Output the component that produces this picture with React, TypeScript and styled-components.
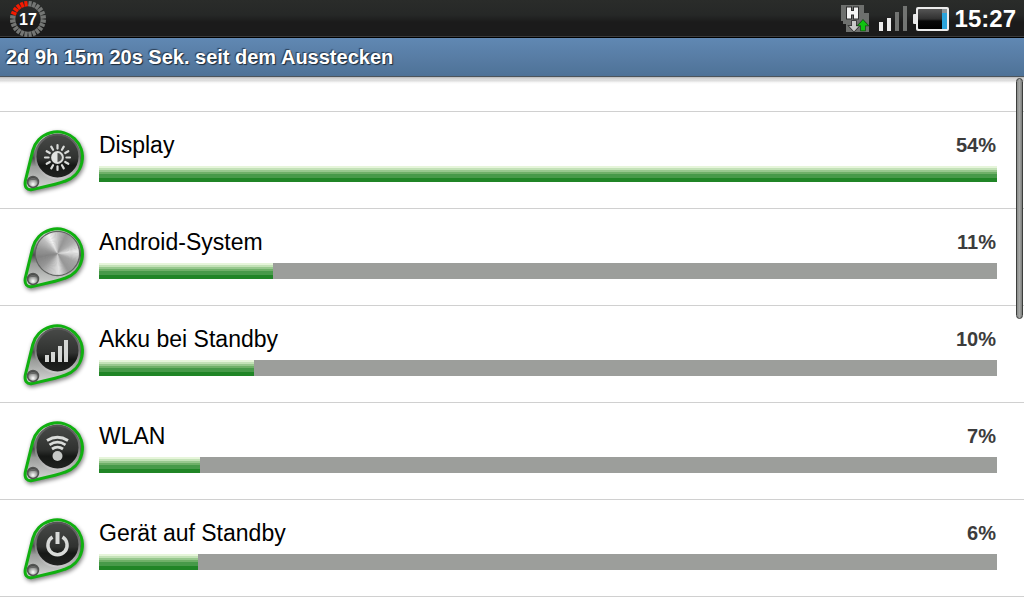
import React from "react";
import styled, { createGlobalStyle } from "styled-components";

const GlobalStyle = createGlobalStyle`
  * { box-sizing: border-box; }
  body {
    margin: 0;
    background: #fff;
    color: #000;
    font-family: "Liberation Sans", Arial, Helvetica, sans-serif;
  }
`;

const Screen = styled.div`
  display: flex;
  flex-direction: column;
  height: 100vh;
  overflow: hidden;
`;

const StatusBar = styled.header`
  display: flex;
  flex: none;
  align-items: center;
  justify-content: space-between;
  height: 38px;
  padding: 0 8px 0 9px;
  background: linear-gradient(#2a2c2a, #262827 40%, #1b1b1b 60%, #1b1b1b);
  border-bottom: 1px solid #000;
  box-shadow: inset 0 -1px 0 #3a3a3a;
`;

const StatusIcons = styled.div`
  display: flex;
  align-items: center;
  gap: 6px;
`;

const Clock = styled.time`
  color: #fff;
  font-size: 24px;
  font-weight: bold;
  line-height: 38px;
`;

const TitleBar = styled.h1`
  flex: none;
  margin: 0;
  padding: 0 6px;
  color: #fff;
  font-size: 20px;
  font-weight: bold;
  line-height: 38px;
  background: linear-gradient(#6088b3, #587da5 50%, #4e7297);
  border-bottom: 1px solid #4c555c;
  text-shadow: 1px 1px 1px #1c2a38, -1px -1px 1px #2c4058;
`;

const Content = styled.main`
  position: relative;
  flex: 1;
  min-height: 0;
  overflow: hidden;
  background: linear-gradient(#b8b8b8, #dcdcdc 2px, #dedede 4px, #f4f4f4 5px, #fff 7px);
`;

const UsageList = styled.ul`
  margin: 0;
  padding: 34px 0 0;
  list-style: none;
`;

const UsageRow = styled.li`
  display: flex;
  align-items: flex-start;
  height: 97px;
  padding: 9px 27px 0 15px;
  border-top: 1px solid #d0d0d0;

  &:last-child { height: 1px; padding: 0; }
`;

const Details = styled.div`
  flex: 1;
  padding: 11px 0 0 4px;
`;

const Labels = styled.div`
  display: flex;
  justify-content: space-between;
  height: 34px;
  padding-right: 1px;
  line-height: 26px;
`;

const Name = styled.label`
  font-size: 23px;
`;

const Share = styled.span`
  color: #3c3c3c;
  font-size: 20px;
  font-weight: bold;
`;

const Meter = styled.progress`
  display: block;
  width: 100%;
  height: 16px;
  border: 0;
  appearance: none;
  background: #9c9e9b;

  &::-webkit-progress-bar { background: #9c9e9b; }
  &::-webkit-progress-value {
    background: linear-gradient(
      #e6f5da 0 2px, #c4e2b8 2px 4px, #98c88e 4px 6px,
      #6fb068 6px 8px, #479a49 8px 12px, #208526 12px 16px
    );
  }
`;

const ScrollThumb = styled.div`
  position: absolute;
  top: 1px;
  right: 1px;
  width: 7px;
  height: 46%;
  background: linear-gradient(90deg, #8a8c8a, #a6a8a6 50%, #7c7e7c);
  border: 1px solid #3c3e3c;
  border-radius: 4px;
`;

const Svg = styled.svg`
  display: block;
  flex: none;
`;

function DayDial() {
  const ticks = Array.from({ length: 24 }, (_, i) => i);
  return (
    <Svg width="38" height="38" viewBox="0 0 38 38" role="img" aria-label="17">
      {ticks.map((i) => (
        <rect key={i} x="17.4" y="1" width="3.2" height="5.4"
          fill={i >= 19 ? "#f51a00" : "#747674"}
          transform={`rotate(${i * 15 + 7.5} 19 19)`} />
      ))}
      <text x="19" y="25" textAnchor="middle" fill="#fff" fontSize="16" fontWeight="bold"
        fontFamily="Liberation Sans, Arial, sans-serif">17</text>
    </Svg>
  );
}

function HsdpaIcon() {
  return (
    <Svg width="32" height="28" viewBox="0 0 32 28" aria-hidden="true">
      <path d="M0 0H23V8H28V27H5V19H2V16H0Z" fill="#6e706e" />
      <path d="M6 2.500h4v3.500h3v-3.500h4v11h-4v-4h-3v4h-4z" fill="#f4f4f4" stroke="#2c2c2c"
        strokeWidth="2" paintOrder="stroke" />
      <path d="M11 16h4v5h3l-5 5.500-5-5.500h3z" fill="#c8cac8" stroke="#2c2c2c"
        strokeWidth="1.500" paintOrder="stroke" />
      <path d="M20 25.500h4v-5h3l-5-5.500-5 5.500h3z" fill="#10c410" stroke="#174a17"
        strokeWidth="1.500" paintOrder="stroke" />
    </Svg>
  );
}

function SignalIcon() {
  return (
    <Svg width="28" height="26" viewBox="0 0 28 26" aria-hidden="true">
      <path d="M0 16h4v9h-4zM8 12h4v13h-4z" fill="#ececec" />
      <path d="M16 6h4v19h-4zM24 0h4v25h-4z" fill="#727472" />
    </Svg>
  );
}

function BatteryIcon() {
  return (
    <Svg width="36" height="24" viewBox="0 0 36 24" aria-hidden="true">
      <defs>
        <linearGradient id="cell" x1="0" y1="0" x2="0" y2="1">
          <stop offset="0" stopColor="#555" />
          <stop offset=".5" stopColor="#303030" />
          <stop offset=".6" stopColor="#080808" />
          <stop offset="1" stopColor="#000" />
        </linearGradient>
      </defs>
      <rect x="0" y="7" width="5" height="10" rx="1" fill="#e8e8e8" />
      <rect x="3" y="0" width="33" height="24" rx="2" fill="#ececec" />
      <rect x="5" y="2" width="29" height="20" rx="1" fill="url(#cell)" />
      <rect x="29" y="2" width="5" height="20" fill="#2ba4dc" />
      <rect x="29" y="2" width="5" height="4" fill="#8c9498" />
    </Svg>
  );
}

type BadgeKind = "sun" | "metal" | "signal" | "wifi" | "power";

const CX = 42.5;
const CY = 35.5;
const OUTLINE =
  "M17.800 29.300A25.300 25.300 0 1 1 50 60.200Q46 61.800 40 63.300L17 68.600C12 69.500 9.300 66 10.300 60Z";

function Glyph({ kind }: { kind: BadgeKind }) {
  if (kind === "sun") {
    return (
      <g fill="none" stroke="#dadcda">
        {Array.from({ length: 12 }, (_, i) => (
          <path key={i} d="M42.500 24v3.600" strokeWidth="2.200" strokeLinecap="round"
            transform={`rotate(${i * 30} ${CX} ${CY + 1})`} />
        ))}
        <circle cx={CX} cy={CY + 1} r="5.400" fill="#4c4e4c" strokeWidth="2" />
        <path d="M42.500 31a5.500 5.500 0 0 0 0 11z" fill="#e2e4e2" stroke="none" />
      </g>
    );
  }
  if (kind === "signal") {
    return (
      <path fill="#d4d6d4"
        d="M15 40h4v7h-4zM21 37h4v10h-4zM28 31h4v16h-4zM34 25h4v22h-4z"
        transform="translate(15 0)" />
    );
  }
  if (kind === "wifi") {
    return (
      <g fill="none" stroke="#dadcda" strokeWidth="2.800">
        <path d="M32 28.500Q42.500 22 53 28.500" />
        <path d="M34.500 32.800Q42.500 27.500 50.500 32.800" />
        <path d="M37 37Q42.500 33.200 48 37" />
        <circle cx="42.500" cy="44" r="5" fill="#c6c8c6" stroke="none" />
      </g>
    );
  }
  if (kind === "power") {
    return (
      <g fill="none" stroke="#d8dad8" strokeWidth="3.400">
        <path d="M37.500 28A9.600 9.600 0 1 0 47.500 28" />
        <path d="M42.500 23v12" strokeWidth="4" />
      </g>
    );
  }
  return null;
}

/* Brushed steel: reflected light as [angle, grey level] pairs around the disc. */
const SHEEN = [
  [0, 195], [25, 150], [55, 172], [85, 235], [115, 165], [150, 150],
  [175, 225], [205, 190], [230, 150], [260, 130], [285, 150], [315, 190], [335, 245], [360, 195],
];

function sheenAt(angle: number) {
  const end = SHEEN.findIndex(([a]) => a > angle);
  const [a0, v0] = SHEEN[end - 1];
  const [a1, v1] = SHEEN[end];
  return Math.round(v0 + ((v1 - v0) * (angle - a0)) / (a1 - a0));
}

function BrushedDisc() {
  return (
    <g>
      <circle cx={CX} cy={CY} r="22" fill="#999" stroke="#636563" strokeWidth="1.500" />
      {Array.from({ length: 90 }, (_, i) => {
        const v = sheenAt(i * 4);
        return (
          <path key={i} d="M42.500 35.500L41.500 14.200A21.300 21.300 0 0 1 43.500 14.200Z"
            fill={`rgb(${v},${v},${v})`} transform={`rotate(${i * 4} ${CX} ${CY})`} />
        );
      })}
    </g>
  );
}

function Badge({ kind }: { kind: BadgeKind }) {
  const id = (name: string) => `${kind}-${name}`;
  return (
    <Svg width="80" height="80" viewBox="0 0 80 80" aria-hidden="true">
      <defs>
        <filter id={id("soft")} x="-20%" y="-20%" width="140%" height="140%">
          <feGaussianBlur stdDeviation="2" />
        </filter>
        <linearGradient id={id("plate")} x1="0" y1="0" x2="0" y2="1">
          <stop offset="0" stopColor="#e0e2e0" />
          <stop offset=".25" stopColor="#a0a2a0" />
          <stop offset=".45" stopColor="#4c4e4c" />
          <stop offset=".6" stopColor="#9a9c9a" />
          <stop offset="1" stopColor="#d8dad8" />
        </linearGradient>
        <linearGradient id={id("rim")} x1="0" y1="0" x2="0" y2="1">
          <stop offset="0" stopColor="#555" />
          <stop offset=".5" stopColor="#777" />
          <stop offset="1" stopColor="#c8c8c8" />
        </linearGradient>
        <linearGradient id={id("face")} x1="0" y1="0" x2="0" y2="1">
          <stop offset="0" stopColor="#484a48" />
          <stop offset=".55" stopColor="#303230" />
          <stop offset=".7" stopColor="#161816" />
          <stop offset="1" stopColor="#222422" />
        </linearGradient>
        <radialGradient id={id("stud")} cx=".5" cy=".7" r=".6">
          <stop offset="0" stopColor="#fff" />
          <stop offset=".6" stopColor="#a0a2a0" />
          <stop offset="1" stopColor="#484a48" />
        </radialGradient>
      </defs>
      <path d={OUTLINE} fill="#000" stroke="#000" strokeWidth="3" opacity=".5"
        transform="translate(1 2)" filter={`url(#${id("soft")})`} />
      <path d={OUTLINE} fill={`url(#${id("plate")})`} stroke="#10b010" strokeWidth="3"
        strokeLinejoin="round" />
      {kind === "metal" ? (
        <BrushedDisc />
      ) : (
        <circle cx={CX} cy={CY} r="22" fill={`url(#${id("face")})`}
          stroke={`url(#${id("rim")})`} strokeWidth="2" />
      )}
      <circle cx="18" cy="61" r="5.500" fill={`url(#${id("stud")})`} stroke="#525452" strokeWidth="1.500" />
      <path d="M14.500 59a4 4 0 0 1 7 0z" fill="#666866" />
      <Glyph kind={kind} />
    </Svg>
  );
}

const consumers: { name: string; share: string; load: number; icon: BadgeKind }[] = [
  { name: "Display", share: "54%", load: 100, icon: "sun" },
  { name: "Android-System", share: "11%", load: 19.4, icon: "metal" },
  { name: "Akku bei Standby", share: "10%", load: 17.3, icon: "signal" },
  { name: "WLAN", share: "7%", load: 11.3, icon: "wifi" },
  { name: "Gerät auf Standby", share: "6%", load: 11, icon: "power" },
];

export default function App() {
  return (
    <Screen>
      <GlobalStyle />
      <StatusBar>
        <DayDial />
        <StatusIcons>
          <HsdpaIcon />
          <SignalIcon />
          <BatteryIcon />
          <Clock>15:27</Clock>
        </StatusIcons>
      </StatusBar>
      <TitleBar>2d 9h 15m 20s Sek. seit dem Ausstecken</TitleBar>
      <Content>
        <UsageList>
          {consumers.map((c) => (
            <UsageRow key={c.icon}>
              <Badge kind={c.icon} />
              <Details>
                <Labels>
                  <Name htmlFor={`load-${c.icon}`}>{c.name}</Name>
                  <Share>{c.share}</Share>
                </Labels>
                <Meter id={`load-${c.icon}`} value={c.load} max={100} />
              </Details>
            </UsageRow>
          ))}
          <UsageRow aria-hidden="true" />
        </UsageList>
        <ScrollThumb />
      </Content>
    </Screen>
  );
}
